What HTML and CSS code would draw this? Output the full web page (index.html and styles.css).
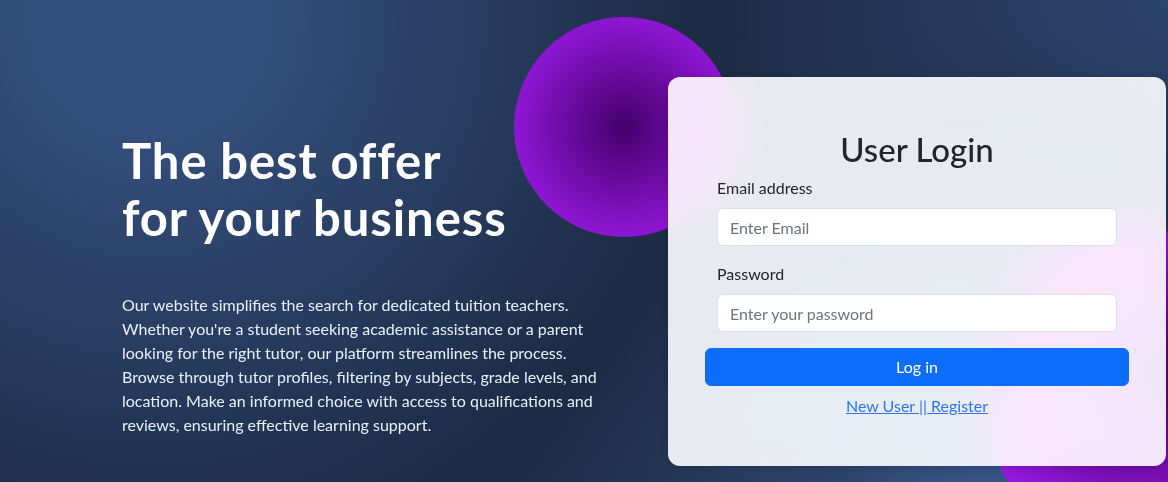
FILE: index.html
```html
<!DOCTYPE html>
<html lang="en">
<head>
<meta charset="utf-8">
<title>User Login</title>
<link rel="stylesheet" href="styles.css">
</head>
<body>
<section class="hero">
  <div class="intro">
    <h1 class="intro-title">The best offer<br>for your business</h1>
    <p class="intro-text">Our website simplifies the search for dedicated tuition teachers. Whether you're a student seeking academic assistance or a parent looking for the right tutor, our platform streamlines the process. Browse through tutor profiles, filtering by subjects, grade levels, and location. Make an informed choice with access to qualifications and reviews, ensuring effective learning support.</p>
  </div>
  <div class="login-wrap">
    <div class="shape shape-1"></div>
    <div class="shape shape-2"></div>
    <div class="card">
      <h2 class="card-title">User Login</h2>
      <form class="login-form">
        <div class="field">
          <label class="field-label" for="email">Email address</label>
          <input class="field-input" id="email" type="email" placeholder="Enter Email">
        </div>
        <div class="field">
          <label class="field-label" for="password">Password</label>
          <input class="field-input" id="password" type="password" placeholder="Enter your password">
        </div>
        <button class="btn-login" type="button">Log in</button>
        <div class="register">
          <a class="register-link" href="#">New User || Register</a>
        </div>
      </form>
    </div>
  </div>
</section>
</body>
</html>
```
FILE: styles.css
```css
* {
  box-sizing: border-box;
}

html, body {
  margin: 0;
  padding: 0;
}

body {
  font-family: "Lato", "Open Sans", sans-serif;
  font-size: 16px;
  line-height: 1.5;
  color: #212529;
}

.hero {
  position: relative;
  width: 1168px;
  height: 482px;
  overflow: hidden;
  display: flex;
  align-items: flex-start;
  padding-left: 122px;
  background-color: hsl(218, 40%, 19%);
  background-image:
    radial-gradient(650px circle at 150px 20px,
      hsl(218, 41%, 35%) 15%,
      hsl(218, 41%, 30%) 35%,
      hsl(218, 41%, 22%) 70%,
      hsl(218, 41%, 19%) 85%,
      transparent 100%),
    radial-gradient(620px circle at 1000px 580px,
      hsl(218, 41%, 40%) 10%,
      hsl(218, 41%, 30%) 30%,
      hsl(218, 41%, 23%) 60%,
      transparent 90%),
    radial-gradient(520px circle at 1168px 0px,
      hsl(218, 41%, 30%) 0%,
      hsl(218, 41%, 25%) 40%,
      transparent 100%);
}

.intro {
  width: 490px;
  padding-top: 132px;
  flex: none;
}

.intro-title {
  margin: 0 0 47px;
  font-size: 49px;
  font-weight: 700;
  line-height: 57px;
  color: #ffffff;
  letter-spacing: 0.9px;
}

.intro-text {
  margin: 0;
  color: hsl(218, 81%, 95%);
  font-size: 16px;
  line-height: 24px;
}

.login-wrap {
  position: relative;
  margin-left: 56px;
  margin-top: 77px;
  width: 498px;
  flex: none;
}

.shape {
  position: absolute;
  z-index: 0;
}

.shape-1 {
  width: 220px;
  height: 220px;
  top: -60px;
  left: -154px;
  border-radius: 50%;
  background: radial-gradient(#44006b, #ad1fff);
}

.shape-2 {
  width: 300px;
  height: 300px;
  bottom: -60px;
  right: -127px;
  border-radius: 38% 62% 63% 37% / 70% 33% 67% 30%;
  background: radial-gradient(#44006b, #ad1fff);
}

.card {
  position: relative;
  z-index: 1;
  height: 389px;
  padding: 53px 37px 48px;
  border-radius: 12px;
  background-color: hsla(0, 0%, 100%, 0.9);
  backdrop-filter: saturate(200%) blur(25px);
  -webkit-backdrop-filter: saturate(200%) blur(25px);
  box-shadow: 0 2px 8px rgba(0, 0, 0, 0.15);
}

.card-title {
  margin: 0 0 8px;
  text-align: center;
  font-size: 33px;
  font-weight: 500;
  line-height: 38px;
  color: #212529;
}

.login-form {
  display: flex;
  flex-direction: column;
}

.field {
  display: flex;
  flex-direction: column;
  padding: 0 12px;
  margin-bottom: 16px;
}

.field-label {
  margin-bottom: 8px;
  font-size: 16px;
  line-height: 24px;
  color: #212529;
}

.field-input {
  height: 38px;
  padding: 6px 12px;
  font-family: inherit;
  font-size: 16px;
  line-height: 24px;
  color: #212529;
  background: #ffffff;
  border: 1px solid #dee2e6;
  border-radius: 6px;
}

.field-input::placeholder {
  color: #6c757d;
}

.btn-login {
  height: 38px;
  padding: 6px 12px;
  font-family: inherit;
  font-size: 16px;
  line-height: 24px;
  color: #ffffff;
  background: #0d6efd;
  border: 1px solid #0d6efd;
  border-radius: 6px;
}

.register {
  margin-top: 8px;
  text-align: center;
  line-height: 24px;
}

.register-link {
  color: #2f76ec;
  text-decoration: underline;
}
```
